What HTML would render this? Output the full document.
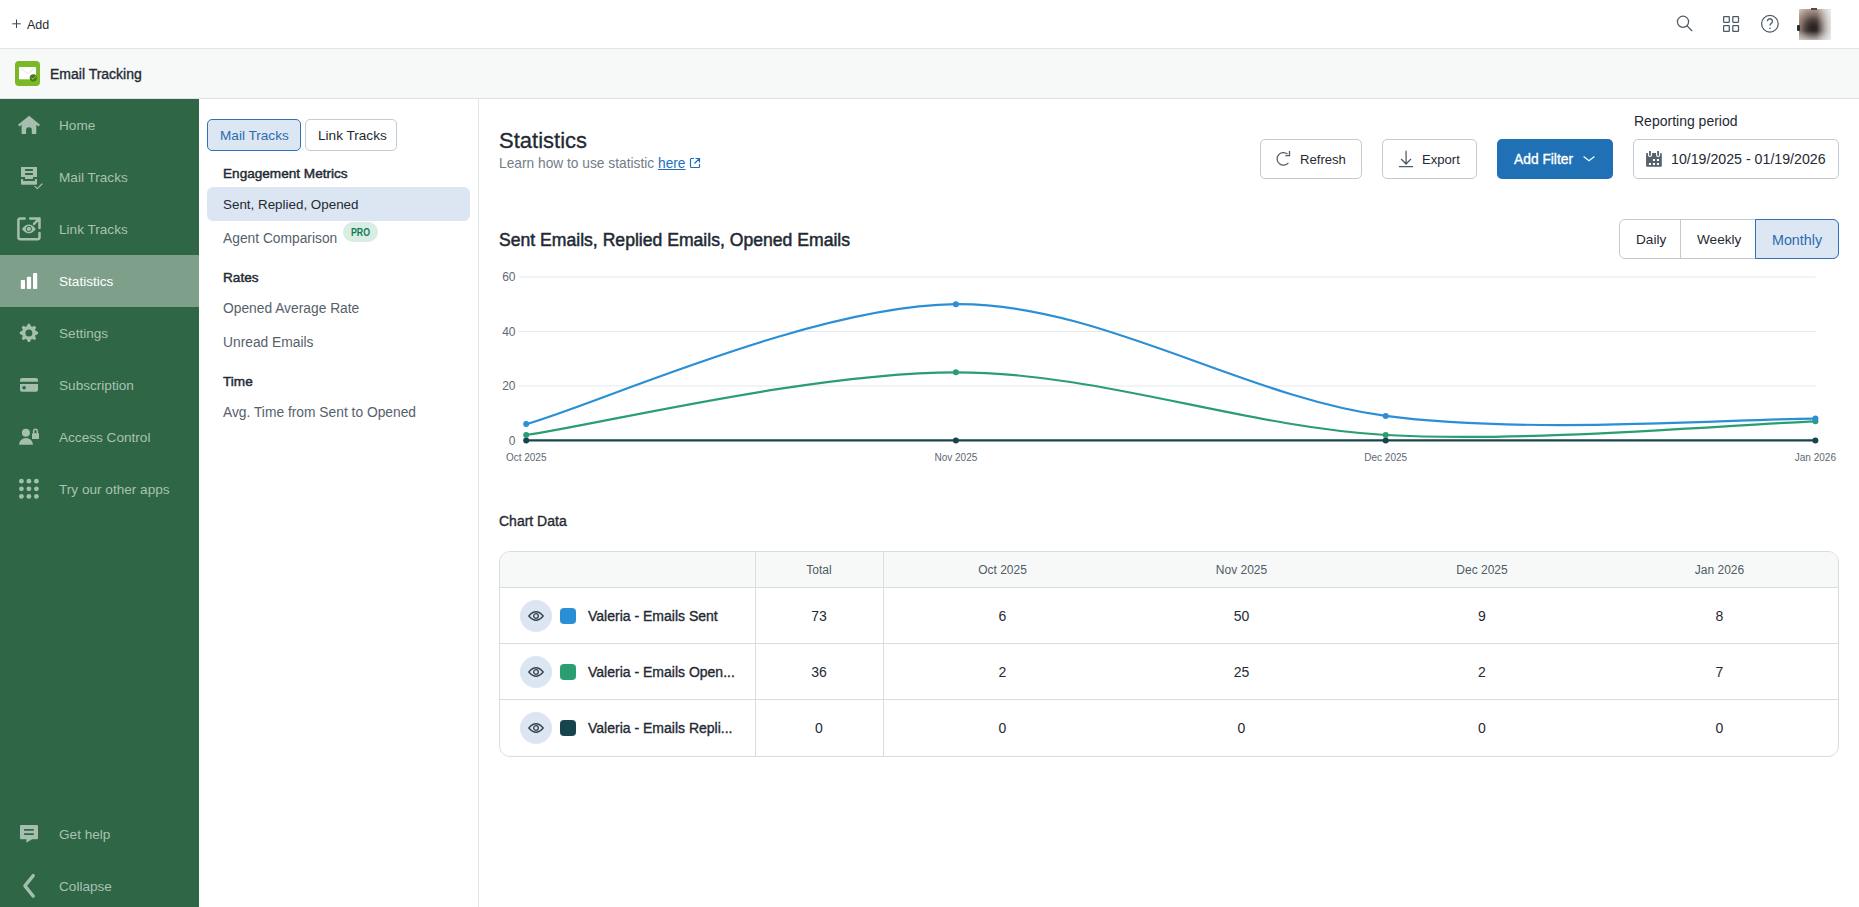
<!DOCTYPE html>
<html><head><meta charset="utf-8">
<style>
*{box-sizing:border-box;margin:0;padding:0}
html,body{width:1859px;height:907px;overflow:hidden;background:#fff;font-family:"Liberation Sans",sans-serif;color:#1f2a33}
.abs{position:absolute}
.t{position:absolute;white-space:nowrap;line-height:1}
.sb{-webkit-text-stroke:0.35px currentColor}
#topbar{position:absolute;left:0;top:0;width:1859px;height:49px;background:#fff;border-bottom:1px solid #e1e4e7}
#apphdr{position:absolute;left:0;top:49px;width:1859px;height:50px;background:#f7f9f8;border-bottom:1px solid #dde1e4}
#side{position:absolute;left:0;top:99px;width:199px;height:808px;background:#2e6646}
.si{position:absolute;left:59px;font-size:13.6px;color:#a9c2b2;white-space:nowrap;line-height:1}
#sub{position:absolute;left:199px;top:99px;width:280px;height:808px;background:#fff;border-right:1px solid #e3e6e8}
.tab{position:absolute;top:20px;height:32px;border:1px solid #c5cbd0;border-radius:5px;font-size:14px;line-height:30px;text-align:center;color:#1f2a33;background:#fff}
.tab.on{background:#dce7f3;border-color:#2d72b8;color:#2a6cae}
.sh{position:absolute;left:223px;font-size:13.6px;-webkit-text-stroke:0.45px currentColor;color:#1f2a33;white-space:nowrap;line-height:1}
.sl{position:absolute;left:223px;font-size:13.8px;color:#56616b;white-space:nowrap;line-height:1}
.btn{position:absolute;top:139px;height:40px;border:1px solid #c3c9ce;border-radius:5px;background:#fff}
.seg{position:absolute;top:219px;height:40px;font-size:14px;color:#1f2a33}
.cell{position:absolute;font-size:14px;color:#1f2a33;white-space:nowrap;line-height:1;text-align:center}
.hcell{position:absolute;top:564px;font-size:12px;color:#4f5b66;white-space:nowrap;line-height:1;text-align:center}
.eye{position:absolute;left:520px;width:32px;height:32px;border-radius:50%;background:#dce6f2}
.sw{position:absolute;left:560px;width:16px;height:16px;border-radius:4px}
.rn{position:absolute;left:588px;font-size:14px;-webkit-text-stroke:0.35px currentColor;color:#1f2a33;white-space:nowrap;line-height:1}
</style></head>
<body>
<div id="topbar"></div>
<svg class="abs" style="left:12px;top:19px" width="10" height="10" viewBox="0 0 10 10"><path d="M4.5 0.5V9M0.3 4.8H8.7" stroke="#3a4650" stroke-width="1"/></svg>
<div class="t" style="left:27px;top:19px;font-size:12.5px;color:#1f2a33">Add</div>
<!-- top right icons -->
<svg class="abs" style="left:1660px;top:0" width="199" height="48" viewBox="1660 0 199 48">
 <g fill="none" stroke="#4b5a65" stroke-width="1.25">
  <circle cx="1683.0" cy="21.8" r="5.6"/>
  <path d="M1687.1 25.9 L1691.8 30.7" stroke-linecap="round"/>
  <rect x="1723.6" y="16.6" width="5.7" height="5.7" rx="0.5"/>
  <rect x="1732.8" y="16.6" width="5.7" height="5.7" rx="0.5"/>
  <rect x="1723.6" y="25.7" width="5.7" height="5.7" rx="0.5"/>
  <rect x="1732.8" y="25.7" width="5.7" height="5.7" rx="0.5"/>
  <circle cx="1769.9" cy="23.7" r="8.3"/>
  <path d="M1767.4 21.3 A2.5 2.5 0 1 1 1771.2 23.4 Q1770.0 24.2 1770.0 25.6" stroke-width="1.3"/>
 </g>
 <circle cx="1770" cy="28.2" r="0.8" fill="#4b5a65"/>
</svg>
<div class="abs" style="left:1799px;top:9px;width:32px;height:31px;background:linear-gradient(90deg, rgba(236,239,240,0) 55%, rgba(236,239,240,0.85) 100%), linear-gradient(180deg, rgba(236,239,240,0) 70%, rgba(236,239,240,0.6) 100%), radial-gradient(farthest-corner at 45% 63%, #2a2020 0%, #332827 14%, #4f423f 32%, #83706a 50%, #a59084 66%, #c8bdb6 85%, #dcd8d6 100%)"></div>
<div class="abs" style="left:1797px;top:25px;width:3px;height:6px;border-radius:1px;background:#2a2f36"></div>
<div class="abs" style="left:1811px;top:8px;width:6px;height:1.5px;background:#5b4640"></div>
<div id="apphdr"></div>
<div class="abs" style="left:15px;top:61px;width:25px;height:25px;background:#7bb826;border-radius:4px"></div>
<svg class="abs" style="left:15px;top:61px" width="25" height="25" viewBox="15 61 25 25">
 <rect x="19" y="67" width="17" height="12.3" fill="#fff"/>
 <path d="M19.3 67.3 L27.5 73.5 L35.7 67.3" fill="none" stroke="#d5dfcf" stroke-width="0.8"/>
 <circle cx="33.3" cy="77.8" r="3.6" fill="#3f7d1d"/>
 <path d="M31.5 77.8 L33 79.2 L36.2 76" fill="none" stroke="#e3c35a" stroke-width="0.9"/>
</svg>
<div class="t sb" style="left:50px;top:67px;font-size:14px;color:#1f2a33">Email Tracking</div>

<div id="side"></div>
<div class="abs" style="left:0;top:255px;width:199px;height:52px;background:#7ea08b"></div>

<svg class="abs" style="left:0;top:0" width="199" height="907" viewBox="0 0 199 907">
<g fill="#a4bfae">
 <!-- home -->
 <path d="M29.1 115.8 L40 124.8 L38.6 126.6 L36.3 124.8 V134 H31.8 V130 A2.85 2.85 0 0 0 26.1 130 V134 H21.6 V124.8 L19.4 126.6 L18 124.8 Z"/>
 <!-- mail tracks -->
 <path fill-rule="evenodd" d="M21 167 H37 V176.9 H33 V178.9 H25 V176.9 H21 Z M25.1 169.1 V170.9 H32.9 V169.1 Z M25.1 172.9 V174.9 H32.9 V172.9 Z"/>
 <path d="M21 179 H23.1 V180.9 H34.9 V179 H37 V183.8 A1 1 0 0 1 36 184.8 H22 A1 1 0 0 1 21 183.8 Z"/>
 <!-- stats -->
 <rect x="20.8" y="280" width="4.2" height="9" rx="0.8" fill="#fff"/>
 <rect x="26.9" y="276.8" width="4.2" height="12.2" rx="0.8" fill="#fff"/>
 <rect x="33" y="273" width="4.2" height="16" rx="0.8" fill="#fff"/>
 <!-- card -->
 <path d="M22 378 H36 A2 2 0 0 1 38 380 V381.7 H20 V380 A2 2 0 0 1 22 378 Z"/>
 <path fill-rule="evenodd" d="M20 383.9 H38 V389.8 A2 2 0 0 1 36 391.8 H22 A2 2 0 0 1 20 389.8 Z M24.1 385.9 A1.8 1.8 0 1 0 24.1 389.5 A1.8 1.8 0 1 0 24.1 385.9 Z"/>
 <!-- person lock -->
 <circle cx="25.9" cy="432.8" r="4"/>
 <path d="M19 444.8 A7 6.8 0 0 1 33 444.8 Z"/>
 <rect x="32" y="433.2" width="7" height="5.7" rx="0.5"/>
 <!-- grid dots -->
 <circle cx="21.4" cy="481.2" r="2.4"/><circle cx="28.9" cy="481.2" r="2.4"/><circle cx="36.4" cy="481.2" r="2.4"/>
 <circle cx="21.4" cy="488.8" r="2.4"/><circle cx="28.9" cy="488.8" r="2.4"/><circle cx="36.4" cy="488.8" r="2.4"/>
 <circle cx="21.4" cy="496.4" r="2.4"/><circle cx="28.9" cy="496.4" r="2.4"/><circle cx="36.4" cy="496.4" r="2.4"/>
 <!-- help bubble -->
 <path fill-rule="evenodd" d="M21 825 H37 A1 1 0 0 1 38 826 V838.3 A1 1 0 0 1 37 839.3 H32 L26.4 842.8 V839.3 H21 A1 1 0 0 1 20 838.3 V826 A1 1 0 0 1 21 825 Z M24.1 829.1 V830.8 H33.8 V829.1 Z M24.1 833.2 V834.9 H33.8 V833.2 Z"/>
 <!-- gear -->
 <path fill-rule="evenodd" d="M26.83 326.21 L27.89 323.76 L29.91 323.76 L30.97 326.21 L32.17 326.71 L34.65 325.72 L36.08 327.15 L35.09 329.63 L35.59 330.83 L38.04 331.89 L38.04 333.91 L35.59 334.97 L35.09 336.17 L36.08 338.65 L34.65 340.08 L32.17 339.09 L30.97 339.59 L29.91 342.04 L27.89 342.04 L26.83 339.59 L25.63 339.09 L23.15 340.08 L21.72 338.65 L22.71 336.17 L22.21 334.97 L19.76 333.91 L19.76 331.89 L22.21 330.83 L22.71 329.63 L21.72 327.15 L23.15 325.72 L25.63 326.71 Z M28.9 329.4 A3.5 3.5 0 1 0 28.9 336.4 A3.5 3.5 0 1 0 28.9 329.4 Z"/>
</g>
<g fill="none" stroke="#a4bfae" stroke-linecap="round" stroke-linejoin="round">
 <path d="M35 186.3 L37.3 188.6 L42 184" stroke-width="1.2"/>
 <path d="M24.6 218.4 H20.4 A2 2 0 0 0 18.4 220.4 V237.3 A2 2 0 0 0 20.4 239.3 H37.5 A2 2 0 0 0 39.5 237.3 V233.1 M30.2 218.4 H39.5 V227.9 M39.5 218.4 L34 223.9" stroke-width="2.5"/>
 <path d="M33.7 433.2 V431 A1.8 1.8 0 0 1 37.3 431 V433.2" stroke-width="1.6"/>
 <path d="M33.2 875.6 L24.9 885.9 L33.2 896.1" stroke-width="3.3"/>
</g>
<g>
 <path d="M21.9 228.9 Q28.9 220 35.8 228.9 Q28.9 237.8 21.9 228.9 Z" fill="#a4bfae"/>
 <circle cx="28.9" cy="228.9" r="2.6" fill="none" stroke="#2e6646" stroke-width="1"/>
</g>
</svg>
<div class="si" style="top:119px">Home</div>
<div class="si" style="top:171px">Mail Tracks</div>
<div class="si" style="top:223px">Link Tracks</div>
<div class="si" style="top:275px;color:#fff">Statistics</div>
<div class="si" style="top:327px">Settings</div>
<div class="si" style="top:379px">Subscription</div>
<div class="si" style="top:431px">Access Control</div>
<div class="si" style="top:483px">Try our other apps</div>
<div class="si" style="top:828px">Get help</div>
<div class="si" style="top:880px">Collapse</div>

<div id="sub"></div>
<div class="abs" style="left:207px;top:119px;width:94px;height:32px;background:#dce7f3;border:1.5px solid #2d72b8;border-radius:5px"></div>
<div class="t" style="left:220px;top:129px;font-size:13.6px;color:#2a6cae">Mail Tracks</div>
<div class="abs" style="left:305px;top:119px;width:92px;height:32px;background:#fff;border:1px solid #c5cbd0;border-radius:5px"></div>
<div class="t" style="left:318px;top:129px;font-size:13.6px;color:#1f2a33">Link Tracks</div>
<div class="sh" style="top:167px">Engagement Metrics</div>
<div class="abs" style="left:207px;top:187px;width:263px;height:34px;background:#dce6f2;border-radius:6px"></div>
<div class="sl" style="top:198px;font-size:13.4px;color:#1f2a33">Sent, Replied, Opened</div>
<div class="sl" style="top:232px">Agent Comparison</div>
<div class="abs" style="left:343px;top:222px;width:35px;height:20px;border-radius:10px;background:#d8eee2"></div>
<div class="t" style="left:351px;top:228px;font-size:10px;font-weight:bold;color:#137a55;transform:scaleX(0.88);transform-origin:0 0">PRO</div>
<div class="sh" style="top:271px">Rates</div>
<div class="sl" style="top:302px">Opened Average Rate</div>
<div class="sl" style="top:336px">Unread Emails</div>
<div class="sh" style="top:375px">Time</div>
<div class="sl" style="top:406px">Avg. Time from Sent to Opened</div>

<!-- main header -->
<div class="t" style="left:499px;top:130px;font-size:22px;color:#1f2a33;-webkit-text-stroke:0.3px currentColor">Statistics</div>
<div class="t" style="left:499px;top:157px;font-size:13.75px;color:#727d87">Learn how to use statistic <span style="color:#1f6fbf;text-decoration:underline">here</span></div>
<svg class="abs" style="left:689px;top:157px" width="12" height="12" viewBox="0 0 12 12"><path d="M5 1.5H2.2A0.8 0.8 0 0 0 1.5 2.3V9.8A0.8 0.8 0 0 0 2.3 10.5H9.7A0.8 0.8 0 0 0 10.5 9.7V7 M6.5 1.5H10.5V5.5 M10.5 1.5L5.5 6.5" fill="none" stroke="#1f6fbf" stroke-width="1.2"/></svg>

<div class="btn" style="left:1260px;width:102px"></div>
<svg class="abs" style="left:1275px;top:150px" width="18" height="18" viewBox="0 0 18 18"><path d="M13.36 12.78 A6.3 6.3 0 1 1 12.45 4.07" fill="none" stroke="#4f5b65" stroke-width="1.25"/><path d="M10.4 5.6 H14.5 V1.1" fill="none" stroke="#4f5b65" stroke-width="1.3"/></svg>
<div class="t" style="left:1300px;top:153px;font-size:13.1px;color:#1f2a33">Refresh</div>
<div class="btn" style="left:1382px;width:95px"></div>
<svg class="abs" style="left:1397px;top:150px" width="18" height="18" viewBox="0 0 18 18"><path d="M9.06 1.2 V13.8 M4.4 9.3 L9.06 14 L13.7 9.3 M2.3 16.5 H15.6" fill="none" stroke="#4f5b65" stroke-width="1.25" stroke-linecap="round"/></svg>
<div class="t" style="left:1422px;top:153px;font-size:13.1px;color:#1f2a33">Export</div>
<div class="abs" style="left:1497px;top:139px;width:116px;height:40px;background:#1f70b5;border-radius:5px"></div>
<div class="t sb" style="left:1514px;top:153px;font-size:13.8px;color:#fff">Add Filter</div>
<svg class="abs" style="left:1582px;top:154px" width="14" height="10" viewBox="0 0 14 10"><path d="M1.9 2.8 L7 6.7 L12.1 2.8" fill="none" stroke="#fff" stroke-width="1.2" stroke-linecap="round"/></svg>
<div class="t" style="left:1634px;top:114px;font-size:14px;color:#1f2a33">Reporting period</div>
<div class="btn" style="left:1633px;width:206px"></div>
<svg class="abs" style="left:1646px;top:151px" width="16" height="16" viewBox="0 0 16 16"><path fill-rule="evenodd" fill="#55626c" d="M0.9 1.9 H1.9 V4 A2.1 2.1 0 0 0 6.1 4 V1.9 H10 V4 A2.1 2.1 0 0 0 14.2 4 V1.9 H15 A0.8 0.8 0 0 1 15.8 2.7 V15 A0.8 0.8 0 0 1 15 15.8 H0.9 A0.8 0.8 0 0 1 0.1 15 V2.7 A0.8 0.8 0 0 1 0.9 1.9 Z M6.9 7.9 V10 H9 V7.9 Z M10.9 7.9 V10 H13 V7.9 Z M2.9 11.9 V14 H5 V11.9 Z M6.9 11.9 V14 H9 V11.9 Z M10.9 11.9 V14 H13 V11.9 Z"/><path fill="#55626c" d="M3.1 0.1 H4.9 V4.1 A0.9 0.9 0 0 1 3.1 4.1 Z M11.2 0.1 H13 V4.1 A0.9 0.9 0 0 1 11.2 4.1 Z"/></svg>
<div class="t" style="left:1671px;top:152px;font-size:14.2px;color:#1f2a33">10/19/2025 - 01/19/2026</div>

<div class="t" style="left:499px;top:232px;font-size:17.6px;-webkit-text-stroke:0.5px currentColor;color:#1f2a33">Sent Emails, Replied Emails, Opened Emails</div>
<div class="abs" style="left:1619px;top:219px;width:220px;height:40px;border:1px solid #c3c9ce;border-radius:6px;background:#fff"></div>
<div class="abs" style="left:1680px;top:219px;width:1px;height:40px;background:#c3c9ce"></div>
<div class="abs" style="left:1755px;top:219px;width:84px;height:40px;border:1.5px solid #2d72b8;border-radius:0 6px 6px 0;background:#dce7f3"></div>
<div class="t" style="left:1636px;top:233px;font-size:13.6px;color:#1f2a33">Daily</div>
<div class="t" style="left:1697px;top:233px;font-size:13.6px;color:#1f2a33">Weekly</div>
<div class="t" style="left:1772px;top:233px;font-size:14.3px;color:#2a6cae">Monthly</div>

<svg class="abs" style="left:0;top:0" width="1859" height="907" viewBox="0 0 1859 907">
<line x1="518.5" y1="277.0" x2="1815.5" y2="277.0" stroke="#e6e8ea" stroke-width="1"/>
<line x1="518.5" y1="331.5" x2="1815.5" y2="331.5" stroke="#e6e8ea" stroke-width="1"/>
<line x1="518.5" y1="385.9" x2="1815.5" y2="385.9" stroke="#e6e8ea" stroke-width="1"/>
<text x="515.5" y="281.3" text-anchor="end" font-size="12" fill="#5d6873">60</text>
<text x="515.5" y="335.8" text-anchor="end" font-size="12" fill="#5d6873">40</text>
<text x="515.5" y="390.2" text-anchor="end" font-size="12" fill="#5d6873">20</text>
<text x="515.5" y="444.7" text-anchor="end" font-size="12" fill="#5d6873">0</text>
<path d="M526.2 440.4 C597.8 440.4 812.7 440.4 955.9 440.4 C1099.2 440.4 1242.4 440.4 1385.7 440.4 C1528.9 440.4 1743.8 440.4 1815.4 440.4" fill="none" stroke="#17444e" stroke-width="2.2"/>
<path d="M526.2 435.0 C597.8 424.5 812.7 372.3 955.9 372.3 C1099.2 372.3 1242.4 426.8 1385.7 435.0 C1528.9 443.1 1743.8 423.6 1815.4 421.3" fill="none" stroke="#2a9d73" stroke-width="2.2"/>
<path d="M526.2 424.1 C597.8 404.1 812.7 305.6 955.9 304.2 C1099.2 302.9 1242.4 396.8 1385.7 415.9 C1528.9 435.0 1743.8 418.2 1815.4 418.6" fill="none" stroke="#2b8fd6" stroke-width="2.2"/>
<circle cx="526.2" cy="440.4" r="3" fill="#17444e"/>
<circle cx="955.9" cy="440.4" r="3" fill="#17444e"/>
<circle cx="1385.7" cy="440.4" r="3" fill="#17444e"/>
<circle cx="1815.4" cy="440.4" r="3" fill="#17444e"/>
<circle cx="526.2" cy="435.0" r="3" fill="#2a9d73"/>
<circle cx="955.9" cy="372.3" r="3" fill="#2a9d73"/>
<circle cx="1385.7" cy="435.0" r="3" fill="#2a9d73"/>
<circle cx="1815.4" cy="421.3" r="3" fill="#2a9d73"/>
<circle cx="526.2" cy="424.1" r="3" fill="#2b8fd6"/>
<circle cx="955.9" cy="304.2" r="3" fill="#2b8fd6"/>
<circle cx="1385.7" cy="415.9" r="3" fill="#2b8fd6"/>
<circle cx="1815.4" cy="418.6" r="3" fill="#2b8fd6"/>
<text x="526.2" y="461" text-anchor="middle" font-size="10" fill="#5d6873">Oct 2025</text>
<text x="955.9" y="461" text-anchor="middle" font-size="10" fill="#5d6873">Nov 2025</text>
<text x="1385.7" y="461" text-anchor="middle" font-size="10" fill="#5d6873">Dec 2025</text>
<text x="1815.4" y="461" text-anchor="middle" font-size="10" fill="#5d6873">Jan 2026</text>
</svg>

<div class="t sb" style="left:499px;top:514px;font-size:14px;color:#1f2a33">Chart Data</div>
<div class="abs" style="left:499px;top:551px;width:1340px;height:206px;border:1px solid #d8dde0;border-radius:11px;overflow:hidden">
  <div class="abs" style="left:0;top:0;width:1340px;height:36px;background:#f7f9f8;border-bottom:1px solid #d8dde0"></div>
  <div class="abs" style="left:0;top:91px;width:1340px;height:1px;background:#d8dde0"></div>
  <div class="abs" style="left:0;top:147px;width:1340px;height:1px;background:#d8dde0"></div>
  <div class="abs" style="left:255px;top:0;width:1px;height:206px;background:#d8dde0"></div>
  <div class="abs" style="left:383px;top:0;width:1px;height:206px;background:#d8dde0"></div>
</div>
<div class="hcell" style="left:755px;width:128px">Total</div>
<div class="hcell" style="left:883px;width:239px">Oct 2025</div>
<div class="hcell" style="left:1122px;width:239px">Nov 2025</div>
<div class="hcell" style="left:1362px;width:240px">Dec 2025</div>
<div class="hcell" style="left:1601px;width:237px">Jan 2026</div>
<div class="eye" style="top:600px"></div>
<svg class="abs" style="left:528px;top:611px" width="16" height="10" viewBox="0 0 16 10"><path d="M0.8 5 Q8 -3.5 15.2 5 Q8 13.5 0.8 5 Z" fill="none" stroke="#34404a" stroke-width="1.3"/><circle cx="8" cy="5" r="2.3" fill="none" stroke="#34404a" stroke-width="1.3"/></svg>
<div class="sw" style="top:608px;background:#2b8fd6"></div>
<div class="rn" style="top:609px">Valeria - Emails Sent</div>
<div class="cell" style="left:755px;width:128px;top:609px">73</div>
<div class="cell" style="left:883px;width:239px;top:609px">6</div>
<div class="cell" style="left:1122px;width:239px;top:609px">50</div>
<div class="cell" style="left:1362px;width:240px;top:609px">9</div>
<div class="cell" style="left:1601px;width:237px;top:609px">8</div>
<div class="eye" style="top:656px"></div>
<svg class="abs" style="left:528px;top:667px" width="16" height="10" viewBox="0 0 16 10"><path d="M0.8 5 Q8 -3.5 15.2 5 Q8 13.5 0.8 5 Z" fill="none" stroke="#34404a" stroke-width="1.3"/><circle cx="8" cy="5" r="2.3" fill="none" stroke="#34404a" stroke-width="1.3"/></svg>
<div class="sw" style="top:664px;background:#2a9d73"></div>
<div class="rn" style="top:665px">Valeria - Emails Open...</div>
<div class="cell" style="left:755px;width:128px;top:665px">36</div>
<div class="cell" style="left:883px;width:239px;top:665px">2</div>
<div class="cell" style="left:1122px;width:239px;top:665px">25</div>
<div class="cell" style="left:1362px;width:240px;top:665px">2</div>
<div class="cell" style="left:1601px;width:237px;top:665px">7</div>
<div class="eye" style="top:712px"></div>
<svg class="abs" style="left:528px;top:723px" width="16" height="10" viewBox="0 0 16 10"><path d="M0.8 5 Q8 -3.5 15.2 5 Q8 13.5 0.8 5 Z" fill="none" stroke="#34404a" stroke-width="1.3"/><circle cx="8" cy="5" r="2.3" fill="none" stroke="#34404a" stroke-width="1.3"/></svg>
<div class="sw" style="top:720px;background:#17444e"></div>
<div class="rn" style="top:721px">Valeria - Emails Repli...</div>
<div class="cell" style="left:755px;width:128px;top:721px">0</div>
<div class="cell" style="left:883px;width:239px;top:721px">0</div>
<div class="cell" style="left:1122px;width:239px;top:721px">0</div>
<div class="cell" style="left:1362px;width:240px;top:721px">0</div>
<div class="cell" style="left:1601px;width:237px;top:721px">0</div>
</body></html>
